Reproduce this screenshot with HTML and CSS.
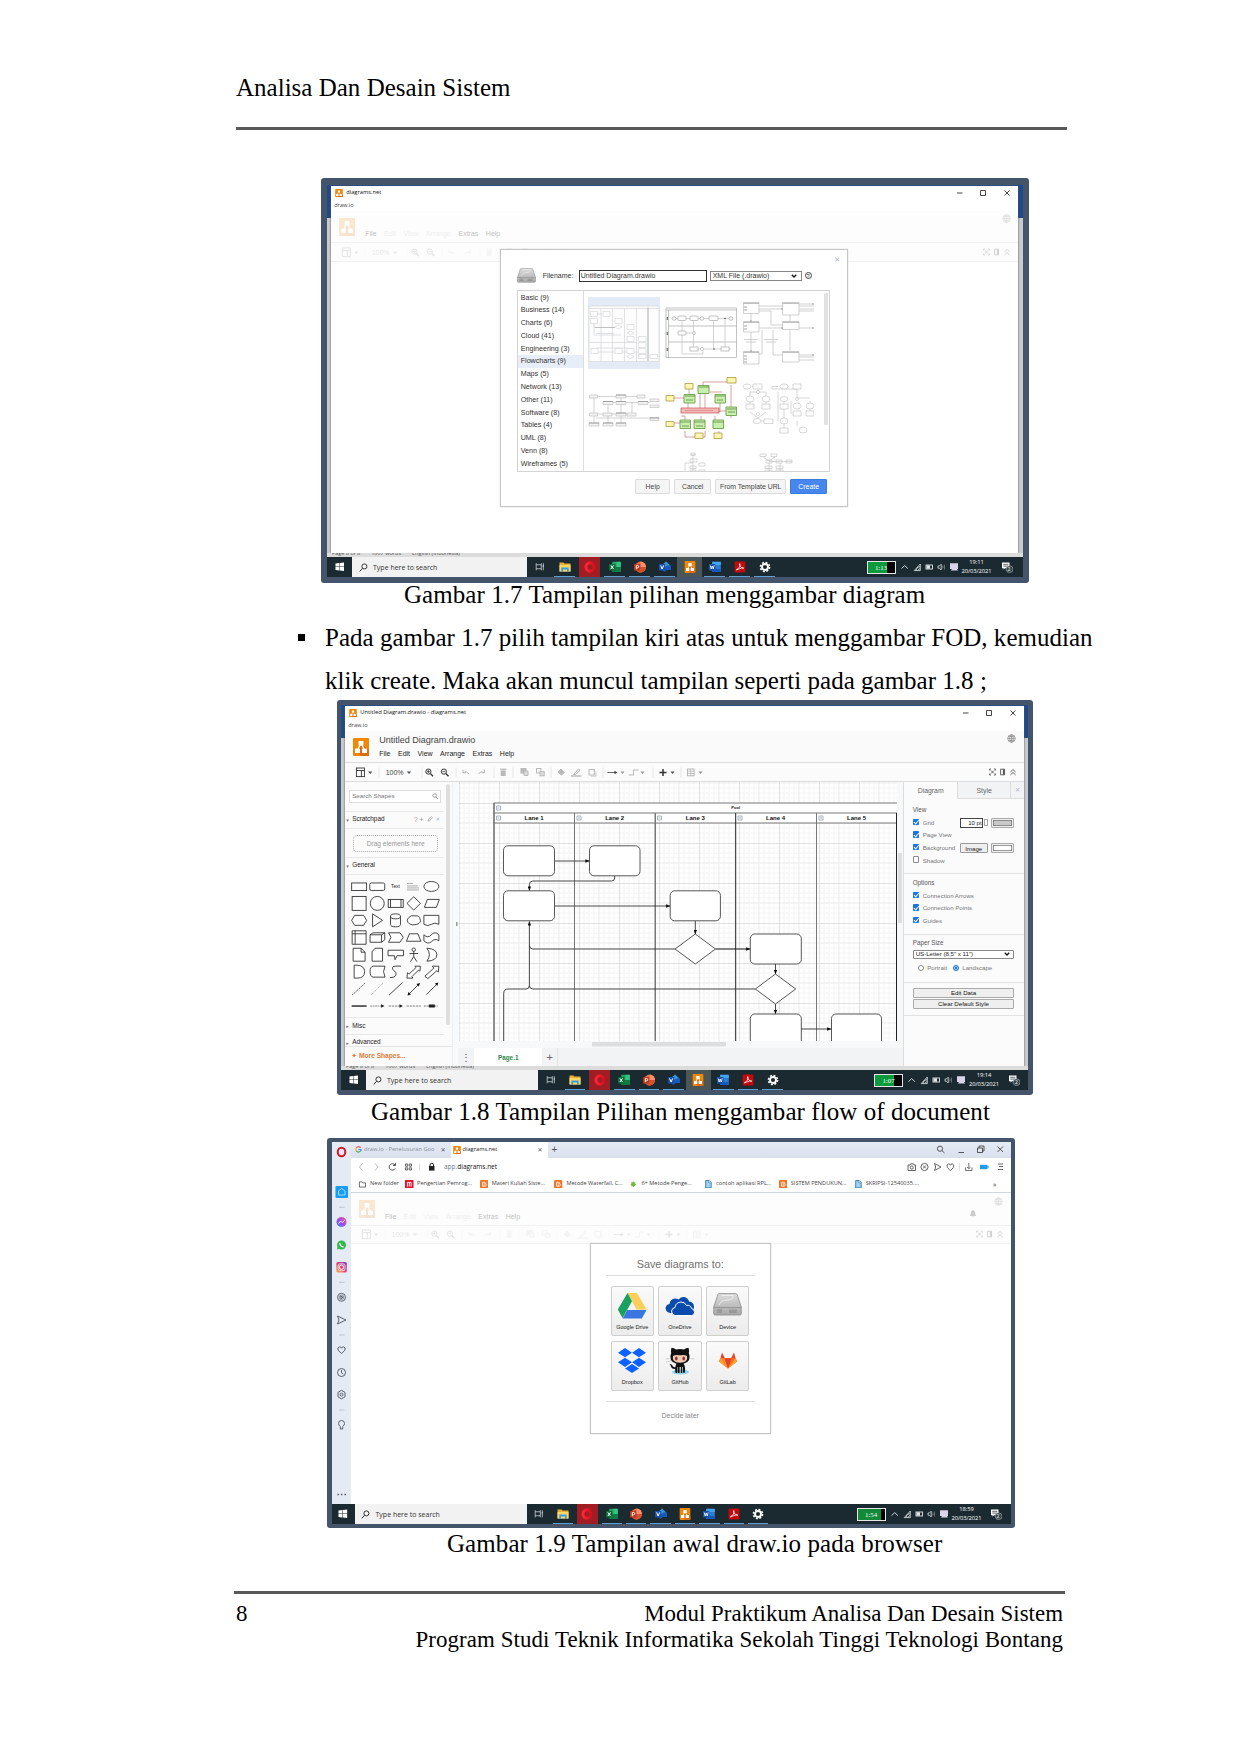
FILE: index.html
```html
<!DOCTYPE html>
<html lang="id">
<head>
<meta charset="utf-8">
<title>Analisa Dan Desain Sistem</title>
<link rel="stylesheet" href="styles.css">
</head>
<body>
<svg class="defs" width="0" height="0">
  <defs>
    <linearGradient id="metal" x1="0" y1="0" x2="0" y2="1"><stop offset="0" stop-color="#ddd"/><stop offset="1" stop-color="#a8a8a8"/></linearGradient>
    <linearGradient id="insta" x1="0" y1="1" x2="1" y2="0"><stop offset="0" stop-color="#fdb04a"/><stop offset=".5" stop-color="#e0417a"/><stop offset="1" stop-color="#7a3fd0"/></linearGradient>
    <linearGradient id="mess" x1="0" y1="1" x2="1" y2="0"><stop offset="0" stop-color="#3a7bff"/><stop offset=".5" stop-color="#a04be8"/><stop offset="1" stop-color="#ff5f80"/></linearGradient>
    <linearGradient id="operag" x1="0" y1="0" x2="1" y2="0"><stop offset="0" stop-color="#ff2635"/><stop offset="1" stop-color="#cf1120"/></linearGradient>
    <pattern id="grid" x="459" y="802.5" width="40" height="40" patternUnits="userSpaceOnUse">
      <path d="M5 0V40M10 0V40M15 0V40M25 0V40M30 0V40M35 0V40M0 5H40M0 10H40M0 15H40M0 25H40M0 30H40M0 35H40" stroke="#f4f4f4" fill="none"/>
      <path d="M20 0V40M0 20H40" stroke="#ebebeb" fill="none"/>
      <path d="M0 0V40M0 0H40" stroke="#d8d8d8" stroke-width="1.6" fill="none"/>
    </pattern>
    <marker id="arr" viewBox="0 0 5 4" refX="4.6" refY="2" markerWidth="4.6" markerHeight="3.4" orient="auto" markerUnits="userSpaceOnUse"><path d="M0 0L5 2L0 4Z" fill="#111"/></marker>
  </defs>
  <symbol id="logo" viewBox="0 0 16 18"><rect width="16" height="18" rx="1" fill="#f08705"/><path d="M9 6L16 12V17Q16 18 15 18H8L4 14Z" fill="#df6c0c"/><path d="M8 5L4.5 12M8 5L11.5 12" stroke="#fff" stroke-width="1.3"/><rect x="5.5" y="3" width="5" height="4.6" rx=".6" fill="#fff"/><rect x="2" y="10.4" width="5" height="4.6" rx=".6" fill="#fff"/><rect x="9" y="10.4" width="5" height="4.6" rx=".6" fill="#fff"/></symbol>
  <symbol id="win" viewBox="0 0 10 10"><path d="M.5 1.7L4.6 1.1V4.7H.5ZM5.1 1L9.8.4V4.7H5.1ZM.5 5.2H4.6V8.9L.5 8.3ZM5.1 5.2H9.8V9.6L5.1 9Z" fill="#fff"/></symbol>
  <symbol id="mag" viewBox="0 0 10 10"><circle cx="6" cy="3.8" r="2.8" fill="none" stroke="currentColor"/><path d="M4 5.9L.8 9.3" stroke="currentColor" stroke-width="1.1"/></symbol>
  <symbol id="magr" viewBox="0 0 10 10"><circle cx="4" cy="3.8" r="2.8" fill="none" stroke="currentColor"/><path d="M6 5.9L9.2 9.3" stroke="currentColor" stroke-width="1.3"/></symbol>
  <symbol id="a-task" viewBox="0 0 12 12"><path d="M1.5 1.500V3.500H8V1.500M1.500 10.500V8.500H8V10.500M1.500 3.500V8.500M8 3.500V8.500" fill="none" stroke="#dfe6e8" stroke-width=".9"/><path d="M10.500 1.500V10.500" stroke="#dfe6e8" stroke-width=".9"/><path d="M9.700 5H11.300" stroke="#dfe6e8" stroke-width="1.400"/></symbol>
  <symbol id="a-file" viewBox="0 0 12 12"><path d="M.5 1.5H4.5L5.5 2.6H11.5V10.5H.5Z" fill="#e9ae35"/><path d="M.5 4H11.5V10.5H.5Z" fill="#fbd766"/><path d="M2.3 10.7V6.5H9.7V10.7H8V8.6H4V10.7Z" fill="#3d9be0"/></symbol>
  <symbol id="a-opera" viewBox="0 0 12 12"><ellipse cx="6" cy="6" rx="4" ry="4.200" fill="none" stroke="url(#operag)" stroke-width="2.900"/></symbol>
  <symbol id="a-excel" viewBox="0 0 12 12"><rect x="3.2" y=".8" width="8.6" height="10.2" rx=".6" fill="#21a366"/><path d="M7.5.8H11.8V6H7.5Z" fill="#33c481"/><path d="M3.2 6H11.8V11H3.2Z" fill="#107c41"/><rect y="3" width="6.4" height="6.4" rx=".5" fill="#0c6b37"/><path d="M1.8 4.3L4.6 8.1M4.6 4.3L1.8 8.1" stroke="#fff"/></symbol>
  <symbol id="a-ppt" viewBox="0 0 12 12"><circle cx="6.6" cy="6" r="5.4" fill="#ed6c47"/><path d="M6.6.6A5.4 5.4 0 0 1 12 6H6.6Z" fill="#ff8f6b"/><path d="M12 6A5.4 5.4 0 0 1 2 9L6 6Z" fill="#d35230"/><rect y="3" width="6.2" height="6.4" rx=".5" fill="#b7371b"/><path d="M2.3 8.3V4.4H3.5A1.1 1.1 0 0 1 3.5 6.8H2.3" fill="none" stroke="#fff" stroke-width=".9"/></symbol>
  <symbol id="a-visio" viewBox="0 0 12 12"><path d="M7 .4L11 4.3L7 8.2L3 4.3Z" fill="#3a96dd"/><path d="M8.5 4.5H12V9H8L5 11L3 8Z" fill="#185abd"/><rect y="3" width="6.2" height="6.4" rx=".5" fill="#1651aa"/><path d="M1.6 4.4L3.1 8.1L4.6 4.4" fill="none" stroke="#fff"/></symbol>
  <symbol id="a-word" viewBox="0 0 12 12"><rect x="3.2" y=".8" width="8.6" height="10.2" rx=".6" fill="#2b7cd3"/><path d="M3.2.8H11.8V4H3.2Z" fill="#41a5ee"/><path d="M3.2 8H11.8V11H3.2Z" fill="#185abd"/><rect y="3" width="6.4" height="6.4" rx=".5" fill="#1651aa"/><path d="M1.2 4.4L2.2 8L3.2 5L4.2 8L5.2 4.4" fill="none" stroke="#fff" stroke-width=".8"/></symbol>
  <symbol id="a-pdf" viewBox="0 0 12 12"><rect x=".6" y=".6" width="10.8" height="10.8" rx=".8" fill="#c3090c"/><path d="M2.3 8.9Q6.3 6.8 6 2.6Q5.2 2.4 5.6 4Q6.8 7.2 9.8 7.3Q9.5 6 2.3 8.9" fill="none" stroke="#fff" stroke-width=".8"/></symbol>
  <symbol id="a-gear" viewBox="0 0 12 12"><circle cx="6" cy="6" r="4.6" fill="none" stroke="#fff" stroke-width="1.5" stroke-dasharray="2 1.6"/><circle cx="6" cy="6" r="3" fill="none" stroke="#fff" stroke-width="1.9"/></symbol>
  <symbol id="tray" viewBox="0 0 58 12"><g fill="none" stroke="#dfe6e8" stroke-width=".9"><path d="M1.5 7.6L4.7 4.6L7.9 7.6"/><path d="M14.2 9.6L20.3 9.6V3L14.2 9.6M16 9.6Q16 6 20 5.5M18 9.6Q18 8 20 7.6" stroke-width=".8"/><rect x="26" y="4" width="6.5" height="4"/><path d="M26.5 6H30" stroke-width="3.4"/><path d="M38 5H39.4L41.2 3.2V9L39.4 7.2H38Z" stroke-width=".8"/><path d="M42.6 4.7Q43.4 6 42.6 7.4M44.4 3.6V8.6" stroke-width=".6" opacity=".7"/></g><path d="M50 2.3H58V8H57L58 9.6H50.8L52 8H50Z" fill="#d9d4e8"/></symbol>
  <symbol id="notif" viewBox="0 0 12 12"><path d="M1 1.5H8.5V7.3H3.8L2.6 8.8V7.3H1Z" fill="#fff"/><path d="M2.2 3.3H7.3M2.2 5.1H7.3" stroke="#1b2a31" stroke-width=".7"/><circle cx="8.6" cy="8.2" r="3.4" fill="#33434b" stroke="#ccc" stroke-width=".5"/></symbol>
  <symbol id="wctl" viewBox="0 0 56 8"><path d="M1 4H6.5M24.5 1.5H29.5V6.5H24.5ZM48.5 1.5L53.5 6.5M53.5 1.5L48.5 6.5" fill="none" stroke="#333" stroke-width=".9"/></symbol>
  <symbol id="globe" viewBox="0 0 9 9"><g fill="none" stroke="currentColor" stroke-width=".7"><circle cx="4.5" cy="4.5" r="3.8"/><ellipse cx="4.5" cy="4.5" rx="1.8" ry="3.8"/><path d="M.7 4.5H8.3M1.3 2.6H7.7M1.3 6.4H7.7M4.5.7V8.3"/></g></symbol>
  <symbol id="tright" viewBox="0 0 27 8"><g fill="none" stroke="currentColor" stroke-width=".9"><path d="M.6 2.5V1H2M5 1H6.4V2.5M6.4 5.5V7H5M2 7H.6V5.5M2 2.5L5 5.5M5 2.5L2 5.5"/><path d="M11.6 1.2H15.6V6.8H11.6Z"/><path d="M14.7 1.2V6.8" stroke-width="1.6"/><path d="M21.4 4L24 1.5L26.6 4M21.4 7L24 4.5L26.6 7"/></g></symbol>
  <symbol id="tools" viewBox="0 0 362 19">
    <g fill="none" stroke="#e2e2e2" stroke-width=".8"><path d="M34 4.5V14.5M77 4.5V14.5M111 4.5V14.5M149 4.5V14.5M168 4.5V14.5M206 4.5V14.5M258 4.5V14.5M308 4.5V14.5M336 4.5V14.5"/></g>
    <g fill="none" stroke="#333"><rect x="11.4" y="5" width="8" height="8.6" stroke-width=".9"/><path d="M11.4 7.5H19.4M16.4 7.5V13.6" stroke-width=".9"/><circle cx="83.4" cy="8.6" r="2.6"/><circle cx="98.9" cy="8.6" r="2.6"/><path d="M85.5 10.7L88 13.2M101 10.7L103.5 13.2" stroke-width="1.3"/><path d="M81.9 8.6H84.9M83.4 7.1V10.1M97.4 8.6H100.4" stroke-width=".8"/><path d="M262.5 9.5H271" stroke="#666"/><path d="M314.5 9.5H321.5M318 6V13" stroke-width="1.5"/></g>
    <path d="M269.5 7.8L272.5 9.5L269.5 11.2Z" fill="#444"/>
    <path d="M23 8.6H27.4L25.2 11ZM61.8 8.6H66.2L64 11ZM325.5 8.6H329.5L327.5 11Z" fill="#555"/>
    <path d="M275.5 8.6H279.5L277.5 11ZM295.5 8.6H299.5L297.5 11ZM353.5 8.6H357.5L355.5 11Z" fill="#999"/>
    <g fill="none" stroke="#b9b9b9" stroke-width="1"><path d="M124 10.8Q121.5 7.4 118 9.6M118 6.8V9.8H121M133.4 10.8Q136 7.4 139.5 9.6M139.5 6.8V9.8H136.5"/><path d="M155 6.2H161.4" stroke-width="1.2"/><path d="M158.2 7.4V13" stroke-width="5"/><rect x="176" y="5.5" width="5" height="4.6" fill="#b9b9b9"/><path d="M179 8H183V12.4H179Z" fill="#ddd"/><rect x="191.5" y="5.5" width="4.4" height="4.4"/><rect x="195" y="8.6" width="4.2" height="4.2" fill="#ddd"/><path d="M213 9L216 6L219.5 9.4L216.4 12Z" fill="#b9b9b9"/><path d="M226 13H236.4" stroke-width="1.4"/><path d="M228.5 11.5L233.5 6L235 7.4L230.5 11.5Z"/><rect x="244" y="6.5" width="5.4" height="5.4"/><path d="M246 13.2H251V8.5" stroke-width=".7"/><path d="M283.6 12H288.5V7H293.5"/><rect x="342.5" y="6" width="6.6" height="6.8"/><path d="M342.5 8.2H349M345.7 6V12.8M342.5 10.5H349" stroke-width=".8"/></g>
  </symbol>
  <symbol id="drive" viewBox="0 0 29 23"><path d="M5 1.5Q5.4.6 6.5.6H22.5Q23.6.6 24 1.5L28.3 14V20.5Q28.3 22 26.8 22H2.2Q.7 22 .7 20.5V14Z" fill="url(#metal)" stroke="#8a8a8a" stroke-width=".8"/><path d="M1 14.6H28" stroke="#888" stroke-width=".8"/><path d="M4 17H9M4 19H9M17 16.5V20M19 16.5V20M21 16.5V20M23 16.5V20" stroke="#777" stroke-width=".8"/><path d="M9 2.5H20Q21 7 14.5 7Q8 7 6 12" fill="none" stroke="#eee"/></symbol>
  <symbol id="blogger" viewBox="0 0 9 9"><rect width="9" height="9" rx="1.3" fill="#f0762a"/><path d="M2.8 2.4H5.2Q6.3 2.6 6 4Q6.8 4.2 6.6 5.4Q6.4 6.6 5.4 6.6H2.8ZM4 3.7H4.8M4 5.3H5.3" fill="none" stroke="#fff" stroke-width=".9"/></symbol>
  <symbol id="doc" viewBox="0 0 9 9"><path d="M1.8.6H5.6L7.6 2.6V8.4H1.8Z" fill="#9fd2f3" stroke="#2673a8" stroke-width=".9"/><path d="M5.2.6V3H7.6" fill="#fff" stroke="#2673a8" stroke-width=".6"/></symbol>
</svg>

<main class="page">
  <header class="running-head">Analisa Dan Desain Sistem</header>
  <hr class="rule">

  <!-- Gambar 1.7 -->
  <figure class="shot shot-a">
    <div class="desktop">
      <section class="window">
        <div class="titlebar"><svg class="mini"><use href="#logo"/></svg><span>diagrams.net</span><svg class="wctl"><use href="#wctl"/></svg></div>
        <div class="subtitle">draw.io</div>
        <div class="apphead faded">
          <svg class="applogo"><use href="#logo"/></svg>
          <div class="appnames"><div class="docname"></div><nav class="menu"><span class="on">File</span><span>Edit</span><span>View</span><span>Arrange</span><span class="on">Extras</span><span class="on">Help</span></nav></div>
          <svg class="globe"><use href="#globe"/></svg>
        </div>
        <div class="toolbar faded"><div class="toolset"><svg class="tools"><use href="#tools"/></svg><span class="zoom">100%</span></div><svg class="tright"><use href="#tright"/></svg></div>
        <div class="dialog template">
          <div class="closex">✕</div>
          <div class="filerow"><svg class="hdd"><use href="#drive"/></svg><label>Filename:</label><div class="input">Untitled Diagram.drawio</div><div class="select">XML File (.drawio)<svg class="chev" viewBox="0 0 6 4"><path d="M.8.8L3 3L5.2.8" fill="none" stroke="#111" stroke-width="1.3"/></svg></div><span class="help">?</span></div>
          <div class="picker">
            <ul class="cats"><li>Basic (9)</li><li>Business (14)</li><li>Charts (6)</li><li>Cloud (41)</li><li>Engineering (3)</li><li class="sel">Flowcharts (9)</li><li>Maps (5)</li><li>Network (13)</li><li>Other (11)</li><li>Software (8)</li><li>Tables (4)</li><li>UML (8)</li><li>Venn (8)</li><li>Wireframes (5)</li></ul>
            <div class="thumbs">
              <svg class="sel" viewBox="0 0 72 72"><rect x="1" y="9" width="70" height="56" fill="#fdfdfd"/><g fill="none" stroke="#cdd0d4" stroke-width=".6"><path d="M1 9H71V64.500H1ZM1 11.500H71M13 11.500V64.500M24.500 11.500V64.500M36.500 11.500V64.500M48.500 11.500V64.500M60 9V64.500"/><path d="M6 28V38H33M6 22V29M9 17H14M8 36.500H26M1 45.500H49M8 55H50M8 51H40"/><path d="M2.500 14.500h7v5h-7zM15 14.500h7v5h-7zM2.500 21.500h7v5h-7zM27 21.500h7v5h-7zM39 27.500h7v5h-7zM39 39.500h7v5h-7zM50.500 39.500h7.500v5h-7.500zM50.500 45.500h7.500v5h-7.500zM50.500 51.500h7.500v5h-7.500zM50.500 57.500h7.500v4h-7.500zM62 57.500h7.500v4H62zM3 51.500h7v5H3zM27 51.500h7v5h-7zM39 51.500h7v5h-7z" fill="#fff"/><path d="M27 30l3.500-2l3.500 2l-3.500 2zM39 36l3.500-2l3.500 2l-3.500 2zM39 59.500l3.500-2l3.500 2l-3.500 2z" fill="#fff"/></g><path d="M6.500 30.500H27M60 11V64" stroke="#999" stroke-width=".6"/></svg>
              <svg class="soft" viewBox="0 0 72 72"><g fill="none" stroke="#888" stroke-width=".7"><path d="M1 11H71.500V60.500H1ZM1 13H71.500M3.500 13V60.500M3.500 29H71.500M3.500 45H71.500"/><g stroke="#aaa"><path d="M11 21.500H68M17 24V36H30M28.500 24V52H66M48.500 24V52M60 20V52M17 38V57H38V54"/></g><g fill="#fff"><circle cx="9" cy="21.500" r="1.800"/><rect x="13" y="19" width="8" height="4.500" rx="1"/><rect x="25" y="19" width="8" height="4.500" rx="1"/><circle cx="37" cy="21.500" r="1.800"/><rect x="44" y="19" width="9" height="4.500" rx="1"/><circle cx="66" cy="21.500" r="1.800"/><rect x="13" y="34" width="8" height="4" rx="1"/><rect x="25" y="50" width="8" height="4"/><rect x="56" y="50" width="8" height="4"/><path d="M35 52l2-2l2 2l-2 2zM27.500 36l1.500-2l1.500 2l-1.500 2z"/></g><path d="M2.300 20V23M2.300 35V38M2.300 51V54M59 21.500H61M48 52H50" stroke="#333" stroke-width="1.200"/></g></svg>
              <svg class="soft" viewBox="0 0 72 72"><g fill="none" stroke="#a8a8a8" stroke-width=".7"><path d="M17 9H41M17 12H41M57 7H72M57 9H72M57 12H72M57 14H72M9 15V25M17 14H29V28H41M17 31H72M9 35V55M20 33V57H17M31 33V58H41M48 17V25M48 33V55M57 58H72M57 60H72M57 63H72M2 42.500H16M4 45H14M22 42.500H36M24 45H34"/><path d="M1.500 5.500h15.500v11h-15.500zM40.500 5.500h16.500v12.500h-16.500zM1.500 24.500h15.500v10.500h-15.500zM40.500 24.500h16.500v8h-16.500zM1.500 54.500h15.500v12.500h-15.500zM40.500 54.500h16.500v10.500h-16.500z" fill="#fff"/><path d="M1.500 6.300H17M40.500 6.300H57M1.500 25.300H17M40.500 25.300H57M1.500 55.300H17M40.500 55.300H57" stroke="#aaa" stroke-width="1.600"/><path d="M2 10H5M2 13H5M2 29H5M2 32H5M2 59H5M2 62H5M2 65H5M39 12H41M39 31H41M70 7H72M70 31H72M70 58H72M8 24H10M8 54H10" stroke="#666" stroke-width=".8"/></g></svg>
              <svg class="soft" viewBox="0 0 72 72"><g fill="none" stroke="#aaa" stroke-width=".7"><path d="M9 22.500H57M15 28.500H62M6 24V49M20 28.500V49M33 24V49M44 28V40M62 32H71M1 40H45M8 44H65M71 46H63"/><path d="M1.500 21h8v3h-8zM28 21h10v3H28zM49 21h8v3h-8zM15 27.500h10v3H15zM28 27.500h10v3H28zM50 27.500h10v3H50zM62 25h9v2.500h-9zM62 31h9v2.500h-9zM1.500 39h8v3h-8zM15 39h9v3h-9zM28 39h10v3H28zM39 39h9v3h-9zM62 43.500h9v3h-9zM1 49h10v3H1zM15 49h10v3H15zM28 49h10v3H28z" fill="#eee"/></g><path d="M28 21H38M15 27.500H25M28 27.500H38M50 27.500H60M28 39H38M1 49H11M15 49H25M28 49H38M62 44H71" stroke="#777" stroke-width=".9"/></svg>
              <svg viewBox="0 0 72 72"><g fill="none" stroke="#c07c7c" stroke-width=".7"><path d="M5 24H22M24 12V20M38 13V8H67M45 18H57M66 11V44M23 27V38M35 18V38H40V18M55 27V38M52 37H62V35M20 50V42H16M36 50V42M50 50V42M9 49H15M20 57V63H30M40 57V63H36M54 57V60"/></g><rect x="16" y="34" width="38" height="5" fill="#f6b9b9" stroke="#c0504d" stroke-width=".7"/><path d="M20 36.500H48" stroke="#d88" stroke-width=".8"/><g stroke="#6da04d" fill="#c9efad" stroke-width=".9"><path d="M33 11.500h11v8H33zM19 20.500h11v8.500H19zM50 20.500h10.500v8.500H50zM61 33h10.500v8.500H61zM15 46h10.500v8.500H15zM29 46h11v8.500H29zM48 46h10.500v8.500H48z"/></g><path d="M34 13H44M20 22H30M50 22H60M62 35H71M15 48H25M29 48H40M48 48H58M21 26H28M52 26H58M63 38H70M17 52H24M31 52H38" stroke="#4b7c35" stroke-width=".7"/><g stroke="#a89a4d" fill="#fff7ad" stroke-width=".8"><path d="M20 9.500h8v5.500h-8zM62 3.500h9v5.500h-9zM1 21.500h8v5.500H1zM1 47.500h8v5H1zM30 59h8v5.500h-8zM49 59h8v5.500h-8z"/></g></svg>
              <svg viewBox="0 0 72 72"><g fill="none" stroke="#bdbdbd" stroke-width=".6"><path d="M10 12.500H18M16 15V18M8 22V34M24 22V34M8 38L16 44L24 38M16 44V47L22 47M16 18H8V22M16 18H24V22M36 12.500H30V15H55M36 47V18M42 27V55M55 14V27M49 27V40M68 27V40M55 24H68M55 47V52"/><g fill="#fff"><ellipse cx="5" cy="12.500" rx="4" ry="2.500"/><path d="M11 10h9v5h-9zM4 30h8v5H4zM20 30h8v5h-8zM22 45h9v4.500h-9zM38 54h8v5h-8zM51 10h8v5h-8zM38 30h8v5h-8zM51 37h8v5h-8zM64 37h8v5h-8zM16 16l2 2l-2 2l-2-2zM16 38l2 2l-2 2l-2-2z"/><ellipse cx="8" cy="25" rx="4" ry="3"/><ellipse cx="24" cy="25" rx="4" ry="3"/><ellipse cx="15" cy="47" rx="4" ry="2.500"/><ellipse cx="42" cy="12.500" rx="4" ry="2.500"/><ellipse cx="42" cy="25" rx="4" ry="2.500"/><ellipse cx="42" cy="47" rx="4" ry="3"/><ellipse cx="55" cy="32" rx="4" ry="3"/><ellipse cx="68" cy="32" rx="4" ry="3"/><ellipse cx="61" cy="56" rx="4" ry="3"/><circle cx="55" cy="25" r="1.500"/></g></g></svg>
              <svg viewBox="0 0 72 72"></svg>
              <svg viewBox="0 0 72 72"><g fill="none" stroke="#bdbdbd" stroke-width=".6"><path d="M26 2h4v2h-4zM25 4h6M28 4V20M25 8h7v3h-7zM34 12h6v3h-6zM25 15h6v2.500h-6zM25 19h6v2h-6zM34 19h6v2h-6zM28 12H20V21"/></g></svg>
              <svg viewBox="0 0 72 72"><g fill="none" stroke="#bdbdbd" stroke-width=".6"><path d="M18 3h6v2.500h-6zM29 3h6v2.500h-6zM21 6L27 10L33 6M24 9h6v3h-6zM34 9h6v3h-6zM44 9h6v3h-6zM27 10.500H50M23 15h7v2.500h-7zM34 15h7v2.500h-7zM23 19h7v2h-7zM34 19h7v2h-7zM27 12V20M38 12V20"/></g></svg>
            </div>
            <div class="vthumb"></div>
          </div>
          <div class="actions"><span class="b1">Help</span><span class="b2">Cancel</span><span class="b3">From Template URL</span><span class="b4">Create</span></div>
        </div>
      </section>
      <div class="behind"><span>Page 8 of 8</span><span>1007 words</span><span>English (Indonesia)</span></div>
      <footer class="taskbar">
        <div class="start"><svg><use href="#win"/></svg></div>
        <div class="search"><svg><use href="#mag"/></svg>Type here to search</div>
        <div class="apps"><i><svg><use href="#a-task"/></svg></i><i class="u"><svg><use href="#a-file"/></svg></i><i class="red"><svg><use href="#a-opera"/></svg></i><i class="u"><svg><use href="#a-excel"/></svg></i><i class="u"><svg><use href="#a-ppt"/></svg></i><i class="u"><svg><use href="#a-visio"/></svg></i><i class="act"><svg><use href="#logo"/></svg></i><i class="u"><svg><use href="#a-word"/></svg></i><i class="u"><svg><use href="#a-pdf"/></svg></i><i class="u"><svg><use href="#a-gear"/></svg></i></div>
        <div class="battery b70">1:13</div><svg class="tray"><use href="#tray"/></svg>
        <div class="clock"><span>19:11</span><span>20/03/2021</span></div>
        <div class="notif"><svg><use href="#notif"/></svg><b>2</b></div>
      </footer>
    </div>
  </figure>
  <p class="caption cap-a">Gambar 1.7 Tampilan pilihan menggambar diagram</p>

  <ul class="steps"><li>Pada gambar 1.7 pilih tampilan kiri atas untuk menggambar FOD, kemudian<br>klik create. Maka akan muncul tampilan seperti pada gambar 1.8 ;</li></ul>

  <!-- Gambar 1.8 -->
  <figure class="shot shot-b">
    <div class="desktop">
      <section class="window">
        <div class="titlebar"><svg class="mini"><use href="#logo"/></svg><span>Untitled Diagram.drawio - diagrams.net</span><svg class="wctl"><use href="#wctl"/></svg></div>
        <div class="subtitle">draw.io</div>
        <div class="apphead">
          <svg class="applogo"><use href="#logo"/></svg>
          <div class="appnames"><div class="docname">Untitled Diagram.drawio</div><nav class="menu"><span>File</span><span>Edit</span><span>View</span><span>Arrange</span><span>Extras</span><span>Help</span></nav></div>
          <svg class="globe"><use href="#globe"/></svg>
        </div>
        <div class="toolbar"><div class="toolset"><svg class="tools"><use href="#tools"/></svg><span class="zoom">100%</span></div><svg class="tright"><use href="#tright"/></svg></div>
        <div class="work">
          <aside class="shapes">
            <div class="shapelist">
              <div class="shapecol">
                <div class="findbox"><span>Search Shapes</span><svg><use href="#magr"/></svg></div>
                <div class="sect s1"><i class="tri">▾</i>Scratchpad<em>? + <svg viewBox="0 0 7 7"><path d="M1 6L1.600 4L5 .8L6.300 2L3 5.400Z" fill="none" stroke="#999" stroke-width=".8"/></svg> <b>✕</b></em></div>
                <div class="dropzone"><span>Drag elements here</span></div>
                <div class="sect s2"><i class="tri">▾</i>General</div>
                <svg class="palette" viewBox="0 0 100 143.500"><g fill="#fff" stroke="#333" stroke-width=".9">
                  <rect x="6.500" y="9" width="15" height="7.500"/><rect x="24.700" y="9" width="15" height="7.500" rx="1.500"/><ellipse cx="86.500" cy="12.500" rx="7.500" ry="5"/>
                  <rect x="7" y="22.500" width="14" height="14"/><circle cx="32.200" cy="29.500" r="7"/><rect x="43.200" y="25.500" width="15" height="8"/><path d="M45.500 25.500V33.500M56 25.500V33.500M68.800 22.800L75.500 29.500L68.800 36.200L62 29.500ZM82.500 25.500H94.500L91.500 33.500H79.500Z"/>
                  <path d="M9.500 41.500H18.500L21.500 46.500L18.500 51.500H9.500L6.500 46.500ZM27.500 40L37.500 46.500L27.500 53ZM45.500 42.500V50.500A5 2.500 0 0 0 55.500 50.500V42.500A5 2.500 0 0 0 45.500 42.500A5 2.500 0 0 0 55.500 42.500M64 43.500Q66 41 70 42Q75 41.500 75 45Q77 49 72 50.500Q67 52 64.500 50Q60.500 47 64 43.500ZM79 41.500H94V50.500Q90 48 86.500 50.500Q83 53 79 50.500Z"/>
                  <path d="M7 57H21V70.500H7ZM7 60H21M10 57V70.500M25 61H36.500V68.500H25ZM25 61L28 59H39.700V66L36.500 68.500M36.500 61L39.700 59M43.500 59H55L58.300 63.500L55 68.500H43.500L46 63.500ZM61.500 67.500L64.500 60H73L76 67.500ZM79 61Q83 65 86.500 61Q90 57 94 61V67Q90 64 86.500 68Q83 71 79 67Z"/>
                  <path d="M8 74.500H16L20 78.500V87.500H8ZM16 74.500V78.500H20M30 74.500H37.500V87.500H27V78ZM43 76.500H58.500V82H52L50 86L49.500 82H43ZM82 74.500Q92 75 92 81Q92 87 82 87.500Q87 81 82 74.500Z"/><circle cx="68.800" cy="76" r="1.700"/><path d="M68.800 77.700V83L65.500 88M68.800 83L72 88M64.500 79.800H73" fill="none"/>
                  <path d="M9 91.500H12Q19.500 92 19.500 98Q19.500 104.500 12 104.500H9ZM28 92.500H40Q37 98 40 103.500H28Q25 103 25 98Q25 93 28 92.500Z"/><path d="M45 104Q52 104 51 99Q46 95 48 93Q50 92 56 92.500" fill="none"/><path d="M62 104.500L62.500 99L64 100.500L71 94L70 92.500H75.500L75 97.500L73.500 96.500L67 103L68 104.500ZM80 102.500L89 94.500L87.500 92.500H94L93.500 98.500L92 97L83 105Z"/>
                  <path d="M7 121.500L20.500 109" stroke-dasharray="1.500 .8" fill="none"/><path d="M26 121.500L38.500 109" stroke="#999" stroke-dasharray="1 1"/><path d="M44 121.500L57.500 109M63.500 121L74 110.500M81.500 121L92.500 110"/><path d="M62.500 122L63.500 118.500L66 121ZM75 109.500L74 113L71.500 110.500ZM93.500 109L92.500 112.500L90 110Z" fill="#111" stroke="none"/>
                  <path d="M6.500 132.500H21.500" stroke="#222" stroke-width="1.400"/><path d="M25 132.500H36" stroke="#888" stroke-dasharray="2 .5"/><path d="M43.500 132.500H56M61.500 132.500H76M79 132.500H93" stroke="#777" stroke-dasharray="2.500 .7"/><path d="M36 130.800L39.500 132.500L36 134.200ZM54.500 130.800L58 132.500L54.500 134.200ZM84 131H90V134H84Z" fill="#222" stroke="none"/>
                </g><text x="46" y="14.200" font-size="4.800" fill="#222">Text</text><path d="M62 9.500H68M62 12H73M62 14H74M62 16H74" stroke="#999" stroke-width=".8"/></svg>
                <div class="sect s3"><i class="tri">▸</i>Misc</div>
                <div class="sect s4"><i class="tri">▸</i>Advanced</div>
              </div>
              <div class="vbar"></div>
            </div>
            <div class="more"><b>✦</b>More Shapes...</div>
          </aside>
          <div class="splitter"></div>
          <div class="center">
            <svg class="canvas" viewBox="458 781.500 439 258.500">
              <rect x="458" y="781" width="439" height="260" fill="#fff"/><rect x="458" y="781" width="439" height="260" fill="url(#grid)"/>
              <path d="M493.700 802.500H897V822.500H493.700Z" fill="#fff"/>
              <g fill="none" stroke="#777" stroke-width="1"><path d="M493.700 802.500H897M493.700 812.500H897M493.700 822.500H897"/><path d="M494 802.500V1041M574.500 812.500V1041M655.300 812.500V1041M816.500 812.500V1041"/><path d="M735.700 812.500V1041M896.500 812.500V1041" stroke="#222"/><path d="M494 802.500V1041M655.300 812.500V1041" stroke-width="1.300"/></g>
              <g fill="#fff" stroke="#8b97a5" stroke-width=".7"><path d="M496.500 805.500h4v4h-4zM496.500 815.500h4v4h-4zM577 815.500h4v4h-4zM657.500 815.500h4v4h-4zM738 815.500h4v4h-4zM819 815.500h4v4h-4zM497.500 807.500h2M497.500 817.500h2M578 817.500h2M658.500 817.500h2M739 817.500h2M820 817.500h2"/></g>
              <g font-size="6" font-weight="bold" text-anchor="middle" fill="#111"><text x="534" y="819.800">Lane 1</text><text x="614.700" y="819.800">Lane 2</text><text x="695.300" y="819.800">Lane 3</text><text x="775.500" y="819.800">Lane 4</text><text x="856.500" y="819.800">Lane 5</text><text x="735.700" y="808.900" font-size="4">Pool</text></g>
              <g fill="#fff" stroke="#444" stroke-width=".9"><rect x="503.500" y="845.300" width="51" height="30" rx="4.500"/><rect x="589.500" y="845.300" width="50.500" height="30" rx="4.500"/><rect x="503.500" y="890.300" width="51" height="30" rx="4.500"/><rect x="670.200" y="890.300" width="50.200" height="30" rx="4.500"/><rect x="750.300" y="933.500" width="51" height="30" rx="4.500"/><rect x="750.300" y="1013.500" width="51" height="40" rx="4.500"/><rect x="831.500" y="1013.500" width="50" height="40" rx="4.500"/><path d="M695.300 933.500L715.500 948.500L695.300 963.500L675 948.500ZM775.500 973.500L795.700 988.500L775.500 1003.500L755.300 988.500Z"/></g>
              <g fill="none" stroke="#333" stroke-width=".9"><path d="M555 860.500H589.300" marker-end="url(#arr)"/><path d="M614.700 875.500V877.500Q614.700 880.500 611.500 880.500H533Q529.400 880.500 529.400 884V890" marker-end="url(#arr)"/><path d="M555 905.500H670" marker-end="url(#arr)"/><path d="M695.300 920.500V933.500" marker-end="url(#arr)"/><path d="M715.500 948.500H750" stroke="#111" stroke-width="1" marker-end="url(#arr)"/><path d="M775.500 963.500V973.500" marker-end="url(#arr)"/><path d="M775.500 1003.500V1013.300" marker-end="url(#arr)"/><path d="M801.300 1028.500H831" marker-end="url(#arr)"/><path d="M675 948.500H533Q529.400 948.500 529.400 945V921" marker-end="url(#arr)"/><path d="M755.300 988.500H533Q529.400 988.500 529.400 985V945M529.400 985Q529.400 988.500 526 988.500H508Q503.700 988.500 503.700 993V1041"/></g>
            </svg>
            <div class="vscroll"></div>
            <div class="hscroll"></div>
            <div class="pages"><span class="dots">⋮</span><span class="tab">Page.1</span><span class="plus">+</span></div>
          </div>
          <aside class="format">
            <div class="tabs"><span class="cur">Diagram</span><span>Style</span><b>✕</b></div>
            <div class="group g1"><h4>View</h4>
              <div class="opt"><i class="ck"></i><span class="lab">Grid</span><span class="num">10 pt</span><span class="spin"></span><span class="swatch grey"></span></div>
              <div class="opt"><i class="ck"></i>Page View</div>
              <div class="opt"><i class="ck"></i><span class="lab">Background</span><span class="imgbtn">Image</span><span class="swatch"></span></div>
              <div class="opt"><i class="ck off"></i>Shadow</div></div>
            <div class="group g2"><h4>Options</h4>
              <div class="opt"><i class="ck"></i>Connection Arrows</div>
              <div class="opt"><i class="ck"></i>Connection Points</div>
              <div class="opt"><i class="ck"></i>Guides</div></div>
            <div class="group g3"><h4>Paper Size</h4>
              <div class="paper">US-Letter (8,5" x 11")<svg class="chev" viewBox="0 0 6 4"><path d="M.8.8L3 3L5.2.8" fill="none" stroke="#111" stroke-width="1.300"/></svg></div>
              <div class="radios"><i class="rd"></i>Portrait<i class="rd on"></i>Landscape</div></div>
            <div class="group g4"><div class="wide">Edit Data</div><div class="wide">Clear Default Style</div></div>
          </aside>
        </div>
      </section>
      <div class="behind"><span>Page 8 of 8</span><span>1007 words</span><span>English (Indonesia)</span></div>
      <footer class="taskbar">
        <div class="start"><svg><use href="#win"/></svg></div>
        <div class="search"><svg><use href="#mag"/></svg>Type here to search</div>
        <div class="apps"><i><svg><use href="#a-task"/></svg></i><i class="u"><svg><use href="#a-file"/></svg></i><i class="red"><svg><use href="#a-opera"/></svg></i><i class="u"><svg><use href="#a-excel"/></svg></i><i class="u"><svg><use href="#a-ppt"/></svg></i><i class="u"><svg><use href="#a-visio"/></svg></i><i class="act"><svg><use href="#logo"/></svg></i><i class="u"><svg><use href="#a-word"/></svg></i><i class="u"><svg><use href="#a-pdf"/></svg></i><i class="u"><svg><use href="#a-gear"/></svg></i></div>
        <div class="battery b70">1:07</div><svg class="tray"><use href="#tray"/></svg>
        <div class="clock"><span>19:14</span><span>20/03/2021</span></div>
        <div class="notif"><svg><use href="#notif"/></svg><b>2</b></div>
      </footer>
    </div>
  </figure>
  <p class="caption cap-b">Gambar 1.8 Tampilan Pilihan menggambar flow of document</p>

  <!-- Gambar 1.9 -->
  <figure class="shot shot-c">
    <div class="desktop">
      <div class="browser">
        <svg class="rail" viewBox="331.500 1142 19.500 362">
          <ellipse cx="341" cy="1152" rx="3.800" ry="4.200" fill="none" stroke="#d9142a" stroke-width="2"/>
          <rect x="335" y="1186" width="12.500" height="12" rx="1" fill="#1b9cf0"/><path d="M338 1195V1191L341.200 1188.500L344.500 1191V1195Z" fill="none" stroke="#8fe0ff"/>
          <path d="M338.500 1207.300H344M338.500 1282.300H344M338.500 1335H344M338.500 1410H344" stroke="#b9c0ca" stroke-width=".9"/>
          <circle cx="341" cy="1222" r="5" fill="url(#mess)"/><path d="M338 1223.500L340.300 1221L341.800 1222.500L344 1220.500" fill="none" stroke="#fff"/>
          <circle cx="341" cy="1245" r="4.500" fill="#35b94f"/><path d="M336.500 1249.500L337.200 1246.500L339.500 1248.700Z" fill="#35b94f"/><path d="M339.300 1243Q339.500 1246.500 343 1247" fill="none" stroke="#fff" stroke-width="1.300"/>
          <rect x="335.800" y="1262" width="10.500" height="10.500" rx="1.500" fill="url(#insta)"/><circle cx="341" cy="1267.200" r="2.200" fill="none" stroke="#fff"/><rect x="337.600" y="1263.800" width="6.900" height="6.900" rx="2" fill="none" stroke="#fff" stroke-width=".7"/>
          <g fill="none" stroke="#4b525c" stroke-width=".9"><circle cx="341" cy="1297.300" r="4"/><circle cx="341" cy="1297.300" r="2.300" stroke-width=".6"/><path d="M340.300 1296L342.500 1297.300L340.300 1298.600Z"/><path d="M337 1316L345.500 1320L337 1324L338.500 1320Z"/><path d="M341 1353.500L337.600 1350.200Q336.500 1347.500 339 1346.800Q340.500 1346.800 341 1348.200Q341.500 1346.800 343 1346.800Q345.500 1347.500 344.400 1350.200Z"/><circle cx="341" cy="1372.500" r="4"/><path d="M341 1370V1372.800L342.800 1374.200"/><path d="M341 1390.300L344.500 1392.400V1396.800L341 1398.900L337.500 1396.800V1392.400Z"/><circle cx="341" cy="1394.600" r="1.500"/><path d="M339.800 1426.500Q337.800 1425 338 1423.500A3 3 0 0 1 344 1423.500Q344.200 1425 342.200 1426.500V1429H339.800Z"/></g>
          <path d="M337 1494.500h1.400M340.500 1494.500h1.400M344 1494.500h1.400" stroke="#555" stroke-width="1.400"/>
        </svg>
        <div class="pane">
          <div class="tabstrip">
            <div class="btab"><svg class="g" viewBox="0 0 8 8"><path d="M6.500 2A3 3 0 0 0 1.400 2.600" stroke="#ea4335" fill="none" stroke-width="1.300"/><path d="M1.400 2.600A3 3 0 0 0 1.400 5.400" stroke="#fbbc05" fill="none" stroke-width="1.300"/><path d="M1.400 5.400A3 3 0 0 0 6 6.200" stroke="#34a853" fill="none" stroke-width="1.300"/><path d="M6 6.200Q7.100 5 6.900 4H4" stroke="#4285f4" fill="none" stroke-width="1.300"/></svg><span class="fade">draw.io - Penelusuran Goo</span><b>✕</b></div>
            <div class="btab cur"><svg class="mini"><use href="#logo"/></svg><span>diagrams.net</span><b>✕</b></div>
            <span class="newtab">+</span>
            <svg class="bctl" viewBox="0 0 72 9"><g fill="none" stroke="#444" stroke-width=".9"><circle cx="5" cy="3.700" r="2.600"/><path d="M7 5.700L9.500 8"/><path d="M23.500 7.500H29"/><path d="M42.500 3H47.500V7.500H42.500ZM44 3V1H49V6H47.500M62.500 1.500L68 7M68 1.500L62.500 7"/></g></svg>
          </div>
          <div class="address">
            <svg class="nav" viewBox="0 0 85 10"><g fill="none" stroke="#555"><path d="M4.500 1.500L1.500 5L4.500 8.500M17 1.500L20 5L17 8.500" stroke="#bbb"/><path d="M37 3A3.200 3.200 0 1 0 37.200 6.500M37.500 1V3.500H35"/><path d="M47.500 2H49.700V4.200H47.500ZM51.300 2H53.500V4.200H51.300ZM47.500 5.800H49.700V8H47.500ZM51.300 5.800H53.500V8H51.300Z" stroke-width=".9"/><path d="M61.500 1.500V8.500" stroke="#ccc" stroke-width=".7"/></g><rect x="71" y="4" width="5.500" height="4.600" fill="#222"/><path d="M72 4.500V3A1.700 1.700 0 0 1 75.500 3V4.500" fill="none" stroke="#222"/></svg>
            <span class="url"><i>app.</i>diagrams.net</span>
            <svg class="bicons" viewBox="0 0 98 10"><g fill="none" stroke="#555" stroke-width=".9"><path d="M1 3H3L3.700 1.800H6.300L7 3H8.500V8.500H1Z"/><circle cx="4.800" cy="5.500" r="1.500"/><circle cx="17.500" cy="5" r="3.600"/><path d="M16 3.500L19 6.500M19 3.500L16 6.500"/><path d="M27.500 1.500L34 5L27.500 8.500L28.700 5Z"/><path d="M43.400 8.700L40.400 5.500Q39 2.500 41.500 1.900Q43 1.900 43.400 3.200Q43.800 1.900 45.300 1.900Q47.800 2.500 46.400 5.500Z"/><path d="M52.500 1V9" stroke="#ddd"/><path d="M58.500 5.500V8.500H65V5.500M61.800 1V6.500M60 5L61.800 6.700L63.600 5" stroke-width=".8"/><path d="M91 2H96M92 4.500H96M91 7.500H96" stroke-width=".9"/></g><path d="M73 2.800H80.500V7.200H73Z" fill="#1b9cf0"/><path d="M81 4V6" stroke="#1b9cf0"/></svg>
          </div>
          <div class="bookmarks">
            <span class="k0"><svg viewBox="0 0 9 9"><path d="M1.500 2H4L5 3H8V7.500H1.500Z" fill="none" stroke="#555" stroke-width=".9"/></svg>New folder</span>
            <span><svg viewBox="0 0 9 9"><rect width="9" height="9" rx=".6" fill="#e0112b"/><path d="M2.500 7V2.500H6.500V7M4.500 2.500V7" fill="none" stroke="#fff"/></svg>Pengertian Pemrog...</span>
            <span><svg><use href="#blogger"/></svg>Materi Kuliah Siste...</span>
            <span class="w76"><svg><use href="#blogger"/></svg>Metode Waterfall, C...</span>
            <span><svg viewBox="0 0 9 9"><path d="M4.500 1.500V7.500M1.500 4.500H7.500M2.500 2.500L6.500 6.500M6.500 2.500L2.500 6.500" stroke="#78b13f" stroke-width="1.300"/></svg>6+ Metode Penge...</span>
            <span><svg><use href="#doc"/></svg>contoh aplikasi RPL...</span>
            <span class="w76"><svg><use href="#blogger"/></svg>SISTEM PENDUKUN...</span>
            <span><svg><use href="#doc"/></svg>SKRIPSI-12540035....</span>
            <span class="morebk">»</span>
          </div>
          <div class="apphead faded">
            <svg class="applogo"><use href="#logo"/></svg>
            <div class="appnames"><div class="docname"></div><nav class="menu"><span class="on">File</span><span>Edit</span><span>View</span><span>Arrange</span><span class="on">Extras</span><span class="on">Help</span></nav></div>
            <svg class="bell" viewBox="0 0 8 9"><path d="M.8 7Q1.800 6 1.800 4Q2 1.500 4 1Q6 1.500 6.200 4Q6.200 6 7.200 7ZM3 7.600H5L4 8.600Z" fill="#ccc"/></svg><svg class="globe"><use href="#globe"/></svg>
          </div>
          <div class="toolbar faded"><div class="toolset"><svg class="tools"><use href="#tools"/></svg><span class="zoom">100%</span></div><svg class="tright"><use href="#tright"/></svg></div>
          <div class="dialog save">
            <h3>Save diagrams to:</h3>
            <div class="stores">
              <div><svg viewBox="0 0 30 28"><path d="M10.500 1H20L29.500 17.500H19.500Z" fill="#fcce5b"/><path d="M10.500 1L15 9.300L5.600 26L.8 17.500Z" fill="#18a15f"/><path d="M10.200 18L5.600 26.500H24.800L29.500 18Z" fill="#3b76e0"/></svg>Google Drive</div>
              <div><svg viewBox="0 0 30 28"><path d="M5 21Q.5 20 .6 16Q1 12.500 4.500 12Q5 7 10 6.500Q12 6.500 13.500 7.500Q15.500 4.500 19 5Q23 5.500 24 9.500Q29 10 29 15L28 20Z" fill="#0b4bad"/><path d="M10 23.500Q6.500 23 6.500 19Q7 16 10 15.500Q10.500 10.500 16 10Q20 10 21.500 13.500Q25.500 12.500 26.500 16.500Q30 17.500 29.500 20.500Q29 23.500 26.500 23.500Z" fill="#0b4bad" stroke="#fff" stroke-width="1"/></svg>OneDrive</div>
              <div><svg class="hd"><use href="#drive"/></svg>Device</div>
              <div><svg viewBox="0 0 30 28"><path d="M8 1L15 5.700L8 10.300L1 5.700ZM22 1L29 5.700L22 10.300L15 5.700ZM8 10.700L15 15.300L8 20L1 15.300ZM22 10.700L29 15.300L22 20L15 15.300ZM15 17L22 21.500L15 26L8 21.500Z" fill="#0d62ff"/></svg>Dropbox</div>
              <div><svg viewBox="0 0 30 28"><ellipse cx="15.500" cy="25" rx="8.500" ry="2.500" fill="#8fd0ec"/><path d="M.5 12Q6 11 9 12.500M29.500 12Q24 11 21 12.500M1 15L8 13.500" stroke="#bbb" stroke-width=".6" fill="none"/><path d="M6.500 0.800Q9 .8 11 2.500Q15 1.500 19 2.500Q21 .8 23.500.8Q24.500 4 23.800 6Q25.500 9 24 13Q22.500 16 18.500 16.800Q20.500 19 20 25Q19 27 18 25V20H17.300V26H15.800V20H14.600V26H13V20H12.500V25.500Q10.500 27 10.200 24.500V22Q6.500 22 6 19.500Q5.500 17.500 4.500 17Q7 16.500 8 19.500Q9 20.500 10.500 20Q10.500 18 11.500 16.800Q7.500 16 6 13Q4.500 9 6.200 6Q5.500 4 6.500.8Z" fill="#111"/><path d="M8 9Q10 7.500 15 8.300Q20 7.500 22 9Q23.500 15.500 15 15.700Q6.500 15.500 8 9Z" fill="#f3c9b0"/><ellipse cx="11.300" cy="11.500" rx="1.300" ry="1.900" fill="#7b3b35"/><ellipse cx="18.700" cy="11.500" rx="1.300" ry="1.900" fill="#7b3b35"/></svg>GitHub</div>
              <div><svg viewBox="0 0 30 28"><path d="M15 21.500L6 14.500L7.500 11H22.500L24 14.500Z" fill="#fc6d26"/><path d="M7.500 11H12L15 21.500Z" fill="#fc8a3a"/><path d="M11.500 11.500H18.500L15 21.500Z" fill="#e24329"/><path d="M7.500 11L9 5.500L12 11.500ZM22.500 11L21 5.500L18 11.500Z" fill="#e24329"/><path d="M6 14.500L7.500 11L15 21.500ZM24 14.500L22.500 11L15 21.500Z" fill="#fca326"/></svg>GitLab</div>
            </div>
            <div class="later">Decide later</div>
          </div>
        </div>
      </div>
      <footer class="taskbar">
        <div class="start"><svg><use href="#win"/></svg></div>
        <div class="search"><svg><use href="#mag"/></svg>Type here to search</div>
        <div class="apps"><i><svg><use href="#a-task"/></svg></i><i class="u"><svg><use href="#a-file"/></svg></i><i class="red"><svg><use href="#a-opera"/></svg></i><i class="u"><svg><use href="#a-excel"/></svg></i><i class="u"><svg><use href="#a-ppt"/></svg></i><i class="u"><svg><use href="#a-visio"/></svg></i><i class="u"><svg><use href="#logo"/></svg></i><i class="u"><svg><use href="#a-word"/></svg></i><i class="u"><svg><use href="#a-pdf"/></svg></i><i class="u"><svg><use href="#a-gear"/></svg></i></div>
        <div class="battery b85">1:54</div><svg class="tray"><use href="#tray"/></svg>
        <div class="clock"><span>18:59</span><span>20/03/2021</span></div>
        <div class="notif"><svg><use href="#notif"/></svg><b>2</b></div>
      </footer>
    </div>
  </figure>
  <p class="caption cap-c">Gambar 1.9 Tampilan awal draw.io pada browser</p>

  <hr class="rule foot">
  <footer class="running-foot"><span>8</span><div>Modul Praktikum Analisa Dan Desain Sistem<br><span class="prodi">Program Studi Teknik Informatika Sekolah Tinggi Teknologi Bontang</span></div></footer>
</main>
</body>
</html>
```

FILE: styles.css
```css
* { box-sizing: border-box; margin: 0; padding: 0; }
body { background: #fff; color: #000; font: 24.96px/28px "Liberation Serif", "Times New Roman", serif; }
ul { list-style: none; }
i, em { font-style: normal; }
svg { display: block; flex: none; }
.defs { position: absolute; }

/* page */
.page { width: 1241px; height: 1754px; padding-top: 74px; overflow: hidden; display: flex; flex-direction: column; align-items: flex-start; }
.running-head { margin-left: 236px; white-space: nowrap; letter-spacing: .03px; }
.rule { width: 831px; height: 3px; border: 0; background: #595959; margin: 25px 0 0 236px; }
.rule.foot { margin: 33px 0 0 234px; }
.caption { white-space: nowrap; letter-spacing: .08px; }
.cap-a { margin: -2px 0 0 404px; }
.cap-b { margin: 3px 0 0 371px; }
.cap-c { margin: 2px 0 0 447px; letter-spacing: .1px; }
.steps { margin: 7px 0 0 298px; line-height: 43px; white-space: nowrap; letter-spacing: .035px; }
.steps li { display: flex; }
.steps li::before { content: ""; width: 7px; height: 7px; background: #000; margin: 18px 20px 0 0; }
.running-foot { width: 827px; margin: 7px 0 0 236px; display: flex; justify-content: space-between; text-align: right; font-size: 22.92px; line-height: 26px; letter-spacing: .02px; }
.prodi { letter-spacing: .09px; }

/* framed screenshots */
.shot { background: #44546a; border-radius: 3px; flex: none; font: 7px/1 "Liberation Sans", Arial, sans-serif; color: #333; }
.shot text { font-family: "Liberation Sans", Arial, sans-serif; }
.shot-a { width: 708px; height: 405px; margin: 48px 0 0 320.500px; padding: 7px 6px 6px 6.500px; --pitch: 25px; --start: 25px; --search: 175px; }
.shot-b { width: 696px; height: 395px; margin: -2px 0 0 336.500px; padding: 5px 4.500px 5px 4.500px; --pitch: 24.700px; --start: 25px; --search: 172px; }
.shot-c { width: 688px; height: 390px; margin: 12px 0 0 327px; padding: 4px 4.500px 4px 4.500px; --pitch: 24.400px; --start: 23px; --search: 172px; }
.desktop { width: 100%; height: 100%; display: flex; flex-direction: column; background: linear-gradient(#1f4a8c 33px, #c9cbce 33px); overflow: hidden; }
.window { flex: 1; min-height: 0; margin: 1px 4.200px 0; background: #fff; box-shadow: 0 0 2px #555; display: flex; flex-direction: column; }
.titlebar { height: 14px; padding: 0 9px 0 4px; display: flex; align-items: center; gap: 3px; font: 5.750px/1 "Open Sans", sans-serif; color: #111; }
.mini { width: 8px; height: 8.500px; }
.wctl { width: 56px; height: 8px; margin-left: auto; }
.titlebar .wctl { margin-right: -3px; }
.subtitle { height: 11px; padding: 2px 0 0 3px; font: 5.600px/7px "Open Sans", sans-serif; color: #444; }
.apphead { height: 32px; background: #fafafa; border-bottom: 1px solid #ddd; display: flex; padding: 7px 7.500px 0 8px; }
.applogo { width: 16px; height: 18px; }
.appnames { margin-left: 10px; flex: 1; }
.docname { height: 12.700px; font-size: 9px; line-height: 6px; color: #444; margin-top: -1.500px; }
.menu { display: flex; gap: 7.500px; font-size: 7px; line-height: 10px; color: #222; }
.globe { width: 9px; height: 9px; margin-top: -4px; color: #888; }
.toolbar { height: 19px; background: #fbfbfb; border-bottom: 1px solid #ddd; display: flex; justify-content: space-between; align-items: center; padding-right: 8px; }
.toolset { display: grid; align-items: center; }
.toolset > * { grid-area: 1 / 1; }
.zoom { padding-left: 40.500px; font-size: 7px; color: #444; }
.tools { width: 362px; height: 19px; }
.tright { width: 27px; height: 8px; color: #555; }
.faded { background: #fdfdfd; border-color: #f1f1f1; }
.faded .applogo { opacity: .18; }
.faded .menu { color: #efefef; }
.faded .menu .on { color: #c2c2c2; }
.faded .toolset { opacity: .12; }
.faded .tright { color: #cfcfcf; }
.faded .globe { color: #dcdcdc; }
.behind { height: 4px; overflow: hidden; background: #dcdcdc; display: flex; gap: 11px; padding-left: 5px; font: 5.500px/2px "Open Sans", sans-serif; color: #555; }
.behind span { margin-top: -1.500px; }

/* taskbar */
.taskbar { height: 20px; flex: none; background: #1b2a31; display: flex; align-items: stretch; color: #fff; font-family: "Open Sans", sans-serif; }
.start { width: var(--start); display: flex; align-items: center; justify-content: center; }
.start svg { width: 9.500px; height: 9.500px; }
.search { width: var(--search); background: #f2f2f2; color: #333; display: flex; align-items: center; gap: 5.500px; padding-left: 6.500px; font-size: 7px; white-space: nowrap; }
.search svg { width: 9px; height: 9px; color: #222; }
.apps { display: flex; flex: 1; }
.apps i { width: var(--pitch); display: flex; align-items: center; justify-content: center; border-bottom: 1px solid transparent; }
.apps svg { width: 12px; height: 12px; }
.apps i:first-child svg { width: 9.500px; height: 9.500px; }
.apps .u { border-image: linear-gradient(90deg, transparent 10%, #5f9fd0 10%, #5f9fd0 90%, transparent 90%) 1; }
.apps .red { background: #a11d24; width: calc(var(--pitch) - 4px); margin: 0 2px; }
.apps .act { background: #4a5657; }
.battery { width: 29px; height: 13px; margin-top: 4px; border: 1px solid #e6e6e6; font: 6.800px/11px "Liberation Serif", serif; text-align: center; color: #fff; }
.b70 { background: linear-gradient(90deg, #0b9a3c 70%, #000 70%); }
.b85 { background: linear-gradient(90deg, #128a38 85%, #000 85%); }
.tray { width: 58px; height: 12px; margin: 4px 0 0 4px; }
.clock { width: 38px; display: flex; flex-direction: column; align-items: center; justify-content: center; font-size: 5.800px; line-height: 9px; letter-spacing: -.1px; }
.notif { width: 12px; margin: 4px 10px 0 5px; position: relative; }
.notif svg { width: 12px; height: 12px; }
.notif b { position: absolute; left: 7px; top: 5px; font-size: 5px; line-height: 6px; font-weight: 400; }
.shot-b .notif { margin-right: 8px; }
.shot-c .notif { margin: 4px 9px 0 4px; }

/* template dialog */
.dialog { background: #fff; border: 1.500px solid #c6c6c6; box-shadow: 0 0 1px #bbb; position: relative; }
.template { width: 348px; height: 258px; margin: -13.500px 0 0 169px; flex: none; padding: 0 16px; }
.closex { position: absolute; right: 7px; top: 6px; font: 7px/8px "DejaVu Sans", sans-serif; color: #a9b6cb; }
.filerow { display: flex; align-items: center; margin-top: 18.500px; height: 15px; color: #333; font-size: 7px; }
.hdd { width: 19px; height: 15px; margin-right: 6.500px; }
.filerow label { width: 36px; }
.input { width: 128px; height: 12px; border: 1.500px solid #333; line-height: 9.500px; padding-left: 1px; }
.select { width: 92px; height: 10px; margin-left: 3px; border: 1px solid #888; line-height: 8px; padding: 0 4px 0 2px; display: flex; justify-content: space-between; align-items: center; }
.chev { width: 6px; height: 4px; }
.help { width: 7px; height: 7px; border: .8px solid #444; border-radius: 50%; margin-left: 3px; font-size: 6px; line-height: 6px; text-align: center; }
.picker { display: flex; width: 312.500px; height: 182px; margin-top: 6.500px; border: 1px solid #d4d4d4; overflow: hidden; }
.cats { width: 66px; border-right: 1px solid #ddd; padding-top: 1px; font-size: 7.150px; }
.cats li { height: 12.800px; line-height: 13px; padding-left: 2.500px; white-space: nowrap; }
.cats .sel { background: #e8eef8; }
.thumbs { display: grid; grid-template-columns: repeat(3, 72px); grid-auto-rows: 72px; gap: 5px; padding: 6px 0 0 4px; width: 240px; }
.thumbs svg { width: 72px; height: 72px; }
.thumbs .sel { background: #e3ecf6; border-radius: 1px; }
.thumbs .soft { opacity: .72; }
.vthumb { width: 4px; height: 132px; margin: 2px 0 0 0; background: #e2e2e2; border-radius: 1px; }
.actions { display: flex; justify-content: flex-end; gap: 4px; margin: 7px 4px 0 0; }
.actions span { height: 15.500px; background: #f5f5f5; border: 1px solid #dcdcdc; border-radius: 1px; font-size: 6.900px; line-height: 14px; text-align: center; white-space: nowrap; color: #444; }
.actions .b1 { width: 35px; } .actions .b2 { width: 37px; } .actions .b3 { width: 71px; }
.actions .b4 { width: 37px; background: #4787ed; border-color: #3b7be0; color: #fff; }

/* editor */
.work { flex: 1; min-height: 0; display: flex; }
.shapes { width: 107px; flex: none; background: #fbfbfb; display: flex; flex-direction: column; }
.shapelist { height: 265px; overflow: hidden; display: flex; border-bottom: 1px solid #e5e5e5; }
.shapecol { width: 99px; }
.findbox { width: 92px; height: 13px; margin: 7.500px 0 8px 4px; border: 1px solid #ddd; background: #fff; display: flex; justify-content: space-between; align-items: center; padding: 0 2px; font-size: 6.200px; color: #777; }
.findbox svg { width: 6.500px; height: 6.500px; }
.sect { height: 18px; border: solid #e8e8e8; border-width: 1px 0; display: flex; align-items: center; font-size: 6.400px; color: #222; }
.tri { width: 7px; font: 5px/6px "DejaVu Sans", sans-serif; color: #777; padding-left: 1px; }
.sect em { margin-left: auto; color: #999; display: flex; gap: 3px; padding-right: 4px; font-size: 7px; }
.sect em svg { width: 6px; height: 6px; }
.sect em b { color: #9db4d4; font: 5.500px/7px "DejaVu Sans", sans-serif; }
.dropzone { height: 28px; padding: 6px 6px 5px 8px; }
.dropzone span { display: block; border: 1px dotted #aaa; border-radius: 4px; height: 17px; text-align: center; font-size: 6.600px; line-height: 15px; color: #999; }
.palette { width: 100px; height: 143px; margin-top: -.500px; }
.sect.s4 { border-top: 0; height: 16px; }
.vbar { width: 4px; height: 241px; margin: 2px 0 0 2px; background: #dedede; border-radius: 2px; }
.more { flex: 1; display: flex; align-items: center; gap: 2px; padding-left: 6px; font-size: 6.600px; font-weight: 700; color: #e07b3c; }
.more b { font: 7px/7px "DejaVu Sans", sans-serif; }
.splitter { width: 6px; flex: none; background: #f8f9fa linear-gradient(#999, #999) 3px 140px/1.500px 4px no-repeat; border-left: 1px solid #eee; }
.center { width: 445px; flex: none; display: grid; grid-template: 258.500px 7px 1fr / 439px 6px; background: #f7f8fa; }
.canvas { width: 439px; height: 258.500px; }
.vscroll { background: linear-gradient(#dcdee0, #dcdee0) 1px 71px/4px 70px no-repeat; }
.hscroll { grid-column: 1 / 3; background: linear-gradient(#dcdee0, #dcdee0) 134px 1px/134px 4.500px no-repeat; }
.pages { grid-column: 1 / 3; background: #f1f3f4; display: flex; align-items: stretch; line-height: 19px; }
.dots { width: 16px; text-align: center; font-size: 10px; color: #555; }
.tab { width: 68px; background: #fff; color: #2e8b4a; font-weight: 700; font-size: 6.400px; text-align: center; }
.plus { width: 16px; text-align: center; font-size: 11px; color: #666; border-right: 1px solid #e4e4e4; }

.format { flex: 1; min-width: 0; background: #fbfbfb; border-left: 1px solid #ddd; color: #777; font-size: 6.100px; }
.tabs { display: flex; height: 17px; font-size: 6.900px; line-height: 17px; text-align: center; color: #666; }
.tabs span, .tabs b { width: 53px; flex: none; background: #f1f3f4; border: solid #ddd; border-width: 0 0 1px 1px; }
.tabs .cur { background: none; border: 0; }
.tabs b { width: auto; flex: 1; font: 6px/16px "DejaVu Sans", sans-serif; color: #a9b6cb; }
.group { border-bottom: 1px solid #e2e2e2; padding: 0 9.500px 0 8.500px; }
.group h4 { font-weight: 400; font-size: 6.300px; line-height: 10px; color: #555; }
.g1 { height: 74.500px; padding-top: 5.500px; } .g2 { height: 61px; padding-top: 4px; } .g3 { height: 48px; padding-top: 3.500px; } .g4 { height: 33px; padding-top: 5px; }
.g1 h4, .g2 h4 { margin-bottom: 1.500px; }
.opt { display: flex; align-items: center; height: 12.600px; padding-top: 1px; white-space: nowrap; }
.ck { width: 6.500px; height: 6.500px; flex: none; background: #1a73e8; border-radius: 1px; margin: -2px 3.500px 0 0; display: flex; justify-content: center; }
.ck::after { content: ""; width: 1.800px; height: 3.600px; margin-top: .6px; border: solid #fff; border-width: 0 1px 1px 0; transform: rotate(40deg); }
.ck.off { background: #fff; border: .8px solid #888; }
.ck.off::after { display: none; }
.lab { width: 37px; flex: none; }
.num { width: 23px; flex: none; height: 9.500px; border: 1px solid #444; text-align: right; line-height: 8px; color: #222; background: #fff; }
.spin { width: 4px; height: 7px; border: 1px solid #aaa; margin: 0 0 0 1px; }
.swatch { width: 23px; flex: none; height: 10.500px; border: 1px solid #aaa; border-radius: 1px; background: #fff; box-shadow: inset 0 0 0 1px #eee, inset 0 0 0 1.800px #777; margin-left: auto; }
.swatch.grey { background: #c9c9c9; }
.imgbtn { width: 28px; flex: none; height: 10.500px; background: #efefef; border: 1px solid #999; border-radius: 1px; text-align: center; line-height: 9px; color: #222; }
.paper { height: 9.500px; margin-top: 1.500px; background: #fff; border: 1px solid #888; border-radius: 1px; display: flex; align-items: center; justify-content: space-between; padding: 0 3px 0 2px; color: #222; }
.radios { display: flex; align-items: center; height: 18px; padding-left: 5px; }
.rd { width: 6.500px; height: 6.500px; border: .8px solid #888; border-radius: 50%; background: #fff; margin-right: 3px; }
.rd.on { margin-left: 6px; border: 1px solid #1a73e8; background: #1a73e8; box-shadow: inset 0 0 0 .8px #fff; }
.wide { height: 10px; margin-bottom: 1px; background: #efefef; border: 1px solid #aaa; border-radius: 1px; text-align: center; line-height: 8.500px; color: #111; }

/* browser */
.browser { flex: 1; min-height: 0; display: flex; background: #fff; }
.rail { width: 19.500px; height: 362px; background: #e4ebf5; }
.pane { flex: 1; display: flex; flex-direction: column; font-family: "Liberation Sans", sans-serif; }
.tabstrip { height: 15.500px; background: linear-gradient(#e6ecf5, #d9e0ec); display: flex; align-items: center; font: 5.700px/1 "Open Sans", sans-serif; color: #222; }
.btab { width: 99.500px; height: 100%; display: flex; align-items: center; gap: 2px; padding: 0 5px 0 4px; white-space: nowrap; }
.btab span { flex: 1; }
.btab b { font: 6px/1 "DejaVu Sans", sans-serif; color: #555; }
.btab .g { width: 7px; height: 7px; }
.btab.cur { width: 97px; background: #fff; padding-left: 2px; font-size: 5.700px; }
.fade { color: #8a909a; }
.newtab { margin-left: 4px; font: 10px/10px "Liberation Sans", sans-serif; color: #555; }
.bctl { width: 72px; height: 9px; margin-left: auto; margin-right: 3.500px; }
.address { height: 19px; display: flex; align-items: center; padding: 0 6px 0 7px; font: 6.500px/1 "Open Sans", sans-serif; color: #111; }
.nav { width: 85px; height: 10px; margin-right: 1px; }
.url i { color: #6b7c93; }
.bicons { width: 98px; height: 10px; margin-left: auto; }
.bookmarks { height: 16px; display: flex; align-items: center; padding-left: 7px; border-bottom: 1px solid #d4d8de; font: 5.650px/1 "Open Sans", sans-serif; color: #444; white-space: nowrap; }
.bookmarks span { width: 74.700px; flex: none; display: flex; align-items: center; gap: 3.500px; }
.bookmarks svg { width: 8.500px; height: 8.500px; }
.bookmarks .k0 { width: 47px; }
.bookmarks .w76 { width: 75px; }
.bookmarks .morebk { width: auto; margin-left: auto; padding-right: 14px; font-size: 7px; }
.shot-c .apphead { height: 33px; padding-top: 8px; }
.shot-c .applogo { margin-top: -1px; }
.shot-c .toolbar { height: 18px; }
.bell { width: 8px; height: 9px; margin: 8px 17px 0 0; }
.save { width: 181.500px; height: 191px; margin: -1px 0 0 238.500px; padding: 0 15px; text-align: center; color: #222; font-size: 5.500px; }
.save h3 { height: 32.500px; padding-top: 12.500px; font-size: 10.800px; line-height: 16px; font-weight: 400; color: #707070; border-bottom: 1px solid #ddd; }
.stores { display: grid; grid-template-columns: repeat(3, 43.500px); gap: 5px 4.200px; padding: 10px 0 10px 5px; border-bottom: 1px solid #ddd; }
.stores div { height: 50px; border: 1px solid #cfcfcf; border-radius: 2px; background: linear-gradient(#fafafa, #ececec); display: flex; flex-direction: column; align-items: center; gap: 5px; padding-top: 5px; }
.stores svg { width: 30px; height: 28px; }
.stores .hd { width: 29px; height: 23px; margin-bottom: 4px; margin-top: 1px; }
.later { font-size: 7px; line-height: 28px; color: #888; }
```
